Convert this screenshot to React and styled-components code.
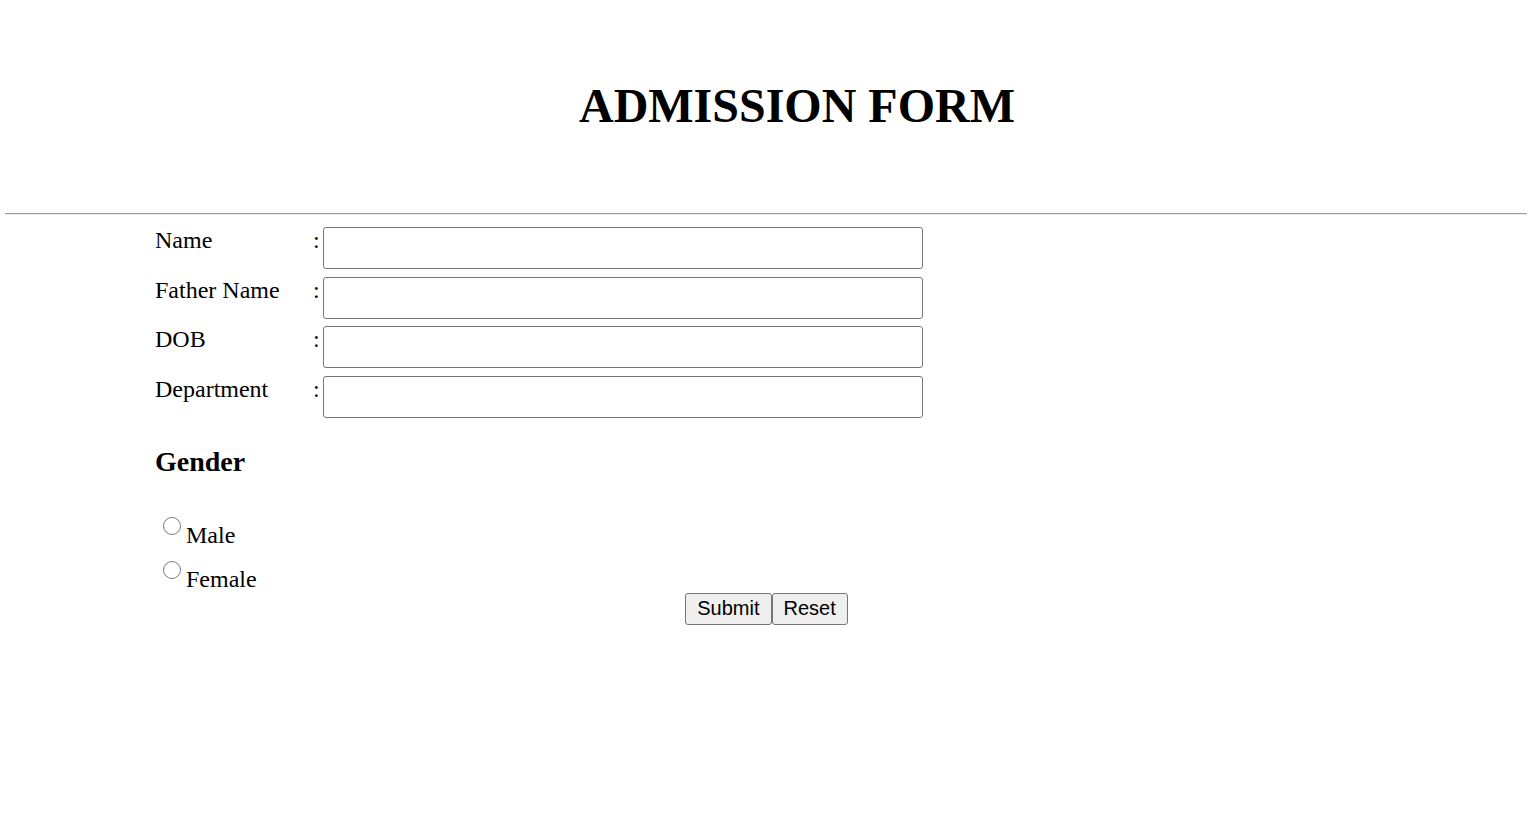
import styled, { createGlobalStyle } from "styled-components";

const GlobalStyle = createGlobalStyle`
  body {
    margin: 0;
    background: #fff;
    color: #000;
    font-family: "Liberation Serif", "Times New Roman", serif;
  }
`;

const fields = ["Name", "Father Name", "DOB", "Department"];

const App = () => {
  return (
    <Page>
      <GlobalStyle />
      <Title>ADMISSION FORM</Title>
      <Rule />
      <Form onSubmit={(e) => e.preventDefault()}>
        <Fields>
          {fields.map((f) => (
            <Row key={f}>
              <span>{f}</span>
              <span>:</span>
              <TextInput type="text" />
            </Row>
          ))}
        </Fields>

        <Section>
          <h3>Gender</h3>
          <Options>
            <Option>
              <Radio type="radio" name="gender" value="male" />
              <span>Male</span>
            </Option>
            <Option>
              <Radio type="radio" name="gender" value="female" />
              <span>Female</span>
            </Option>
          </Options>
        </Section>

        <Buttons>
          <Button type="submit">Submit</Button>
          <Button type="reset">Reset</Button>
        </Buttons>
      </Form>
    </Page>
  );
};

const Page = styled.div`
  padding-top: 78px;
`;

const Title = styled.h1`
  margin: 0;
  padding-left: 61px;
  text-align: center;
  font-size: 48px;
  line-height: 55px;
  font-weight: bold;
`;

const Rule = styled.hr`
  margin: 80px 6px 0 5px;
  border: 0;
  border-top: 1px solid #9a9a9a;
  border-bottom: 1px solid #eeeeee;
  height: 0;
`;

const Form = styled.form`
  margin-top: 12px;
`;

const Fields = styled.div`
  padding-left: 155px;
  display: flex;
  flex-direction: column;
  gap: 7.7px;
`;

const Row = styled.div`
  display: grid;
  grid-template-columns: 158px 10px 600px;
  align-items: start;
  font-size: 24px;
  line-height: 27.6px;
`;

const TextInput = styled.input`
  box-sizing: border-box;
  width: 600px;
  height: 42px;
  margin: 0;
  border: 1px solid #767676;
  border-radius: 3px;
  background: #fff;
  font-size: 20px;
  padding: 0 4px;
`;

const Section = styled.div`
  padding-left: 155px;

  h3 {
    margin: 27.5px 0 0;
    font-size: 28px;
    line-height: 32.2px;
    font-weight: bold;
  }
`;

const Options = styled.div`
  margin-top: 39px;
  display: flex;
  flex-direction: column;
  gap: 13.4px;
`;

const Option = styled.label`
  display: flex;
  align-items: flex-start;
  font-size: 24px;
  line-height: 24px;

  span {
    margin-top: 6.6px;
  }
`;

const Radio = styled.input`
  appearance: none;
  box-sizing: border-box;
  flex: none;
  width: 18px;
  height: 18px;
  margin: 0 5px 0 8px;
  border: 1.5px solid #7a7a7a;
  border-radius: 50%;
  background: #fff;

  &:checked {
    border-color: #0075ff;
    box-shadow: inset 0 0 0 3px #fff;
    background: #0075ff;
  }
`;

const Buttons = styled.div`
  display: flex;
  justify-content: center;
  margin-top: 1.2px;
`;

const Button = styled.button`
  box-sizing: border-box;
  height: 32px;
  margin: 0;
  padding: 0 11px;
  border: 1px solid #767676;
  border-radius: 3px;
  background: #efefef;
  color: #000;
  font-family: "Liberation Sans", Arial, sans-serif;
  font-size: 20px;
`;

export default App;
